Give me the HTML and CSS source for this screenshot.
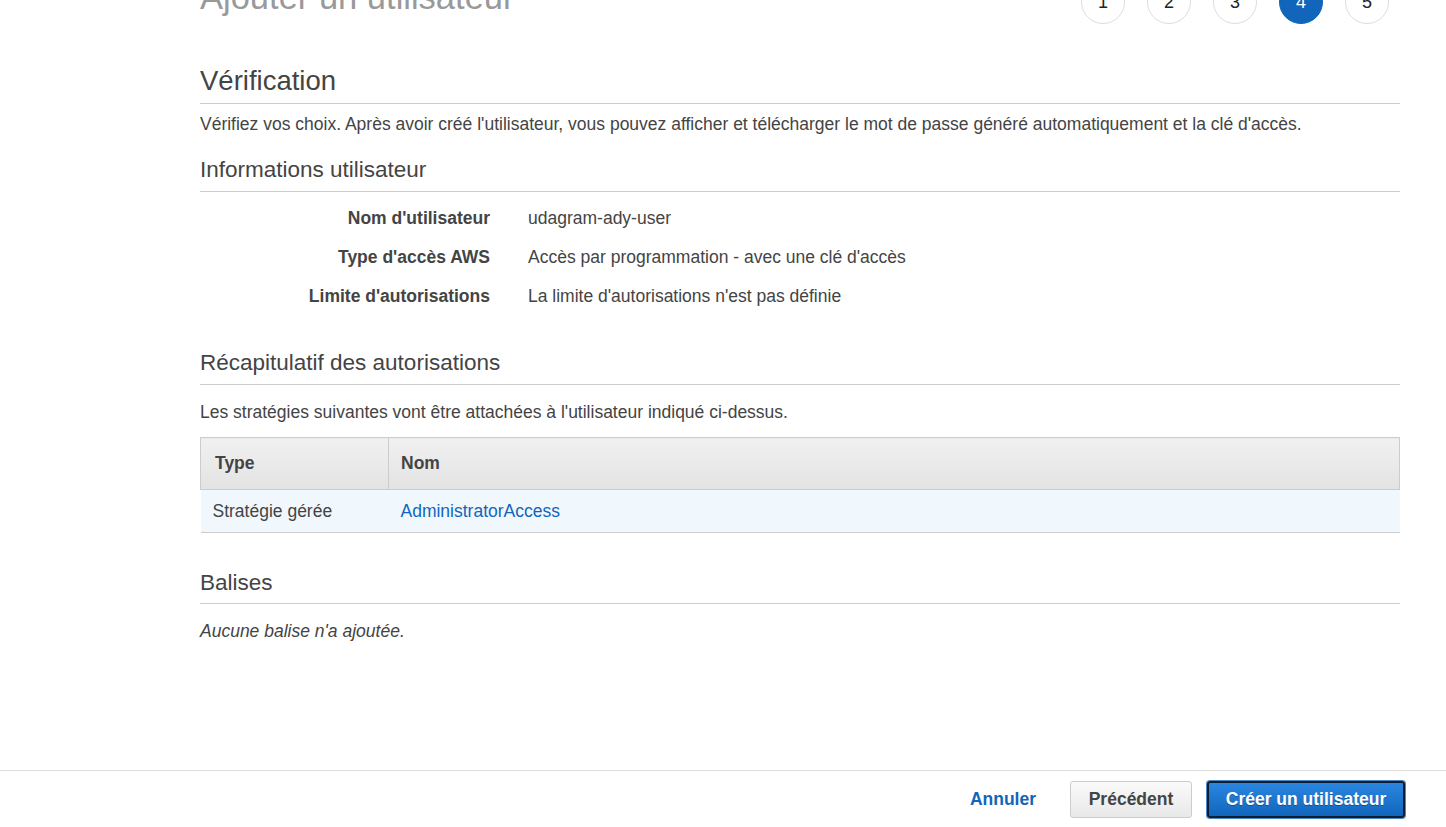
FILE: index.html
```html
<!DOCTYPE html>
<html lang="fr">
<head>
<meta charset="utf-8">
<title>Ajouter un utilisateur</title>
<link rel="stylesheet" href="styles.css">
</head>
<body>
<main class="wizard">
  <header class="wizard-head">
    <h1 class="wizard-title">Ajouter un utilisateur</h1>
    <ol class="steps">
      <li class="step">1</li>
      <li class="step">2</li>
      <li class="step">3</li>
      <li class="step step-active">4</li>
      <li class="step">5</li>
    </ol>
  </header>

  <section class="section section-first">
    <h2 class="section-title section-title-lg">Vérification</h2>
    <p class="text">Vérifiez vos choix. Après avoir créé l'utilisateur, vous pouvez afficher et télécharger le mot de passe généré automatiquement et la clé d'accès.</p>
  </section>

  <section class="section">
    <h3 class="section-title">Informations utilisateur</h3>
    <dl class="details">
      <dt class="details-label">Nom d'utilisateur</dt>
      <dd class="details-value">udagram-ady-user</dd>
      <dt class="details-label">Type d'accès AWS</dt>
      <dd class="details-value">Accès par programmation - avec une clé d'accès</dd>
      <dt class="details-label">Limite d'autorisations</dt>
      <dd class="details-value">La limite d'autorisations n'est pas définie</dd>
    </dl>
  </section>

  <section class="section section-perms">
    <h3 class="section-title">Récapitulatif des autorisations</h3>
    <p class="text text-spaced">Les stratégies suivantes vont être attachées à l'utilisateur indiqué ci-dessus.</p>
    <table class="policies">
      <thead>
        <tr><th class="col-type">Type</th><th>Nom</th></tr>
      </thead>
      <tbody>
        <tr><td>Stratégie gérée</td><td><a class="link" href="#">AdministratorAccess</a></td></tr>
      </tbody>
    </table>
  </section>

  <section class="section section-tags">
    <h3 class="section-title section-title-tight">Balises</h3>
    <p class="text text-spaced text-italic">Aucune balise n'a ajoutée.</p>
  </section>
</main>

<footer class="footer">
  <a class="btn-link" href="#">Annuler</a>
  <button class="btn btn-secondary">Précédent</button>
  <button class="btn btn-primary">Créer un utilisateur</button>
</footer>
</body>
</html>
```

FILE: styles.css
```css
* { box-sizing: border-box; }
html, body { margin: 0; padding: 0; background: #fff; }
body {
  font-family: "Liberation Sans", Arial, sans-serif;
  color: #444;
  font-size: 17.5px;
  overflow: hidden;
  height: 827px;
}
.wizard {
  width: 1200px;
  margin-left: 200px;
}
.wizard-head {
  display: flex;
  justify-content: space-between;
  align-items: flex-start;
  margin-top: -20px;
  height: 44px;
}
.wizard-title {
  margin: -3px 0 0 0;
  font-size: 34.5px;
  line-height: 40px;
  font-weight: normal;
  color: #999;
  white-space: nowrap;
}
.steps {
  display: flex;
  gap: 22px;
  list-style: none;
  margin: 0 11px 0 0;
  padding: 0;
}
.step {
  width: 44px;
  height: 44px;
  border: 1px solid #ddd;
  border-radius: 50%;
  display: flex;
  align-items: center;
  justify-content: center;
  font-size: 18px;
  color: #222;
  background: #fff;
}
.step-active {
  background: #1166bb;
  border-color: #1166bb;
  color: #fff;
}
.section-first { margin-top: 41px; }
.section-title {
  margin: 0;
  font-weight: normal;
  font-size: 22.5px;
  line-height: 30px;
  color: #444;
  padding-bottom: 6px;
  border-bottom: 1px solid #ccc;
}
.section-title-lg {
  font-size: 27.5px;
  line-height: 32px;
  padding-bottom: 6px;
}
.section-title-tight { padding-bottom: 5px; }
.text {
  margin: 8px 0 0 0;
  line-height: 24px;
}
.text-spaced { margin-top: 15px; }
.text-italic { font-style: italic; }
.section + .section { margin-top: 19px; }
.details {
  display: grid;
  grid-template-columns: 290px 1fr;
  column-gap: 38px;
  row-gap: 15px;
  margin: 14px 0 0 0;
}
.details-label {
  text-align: right;
  font-weight: bold;
  line-height: 24px;
}
.details-value {
  margin: 0;
  line-height: 24px;
}
.section-perms { margin-top: 40px !important; }
.policies {
  width: 100%;
  border-collapse: collapse;
  margin-top: 13px;
}
.policies th {
  text-align: left;
  font-weight: bold;
  height: 52px;
  padding: 0 12px;
  background: linear-gradient(#f0f0f0, #e3e3e3);
  border: 1px solid #ccc;
}
.policies th.col-type { width: 188px; padding-left: 14px; }
.policies td {
  height: 43px;
  padding: 0 12px;
  background: #f0f7fd;
  border-bottom: 1px solid #ccc;
}
.link { color: #1166bb; text-decoration: none; }
.section-tags { margin-top: 35px !important; }
.footer {
  position: fixed;
  left: 0;
  right: 0;
  bottom: 0;
  height: 57px;
  border-top: 1px solid #ddd;
  background: #fff;
  display: flex;
  align-items: center;
  justify-content: flex-end;
  padding-right: 41px;
}
.btn-link {
  color: #1166bb;
  font-weight: bold;
  font-size: 17.5px;
  text-decoration: none;
  margin-right: 34px;
}
.btn {
  font-family: "Liberation Sans", Arial, sans-serif;
  font-weight: bold;
  font-size: 17.5px;
  height: 37px;
  border-radius: 3px;
  cursor: pointer;
  padding: 0;
}
.btn-secondary {
  width: 122px;
  color: #444;
  background: linear-gradient(#fafafa, #e8e8e8);
  border: 1px solid #ccc;
  margin-right: 15px;
}
.btn-primary {
  width: 198px;
  color: #fff;
  background: linear-gradient(#2a86e0, #1166bb);
  border: 2px solid #0d1e33;
  box-shadow: 0 0 0 1px #4a88c8;
  text-shadow: 0 1px 0 rgba(0,0,0,0.3);
}
```
